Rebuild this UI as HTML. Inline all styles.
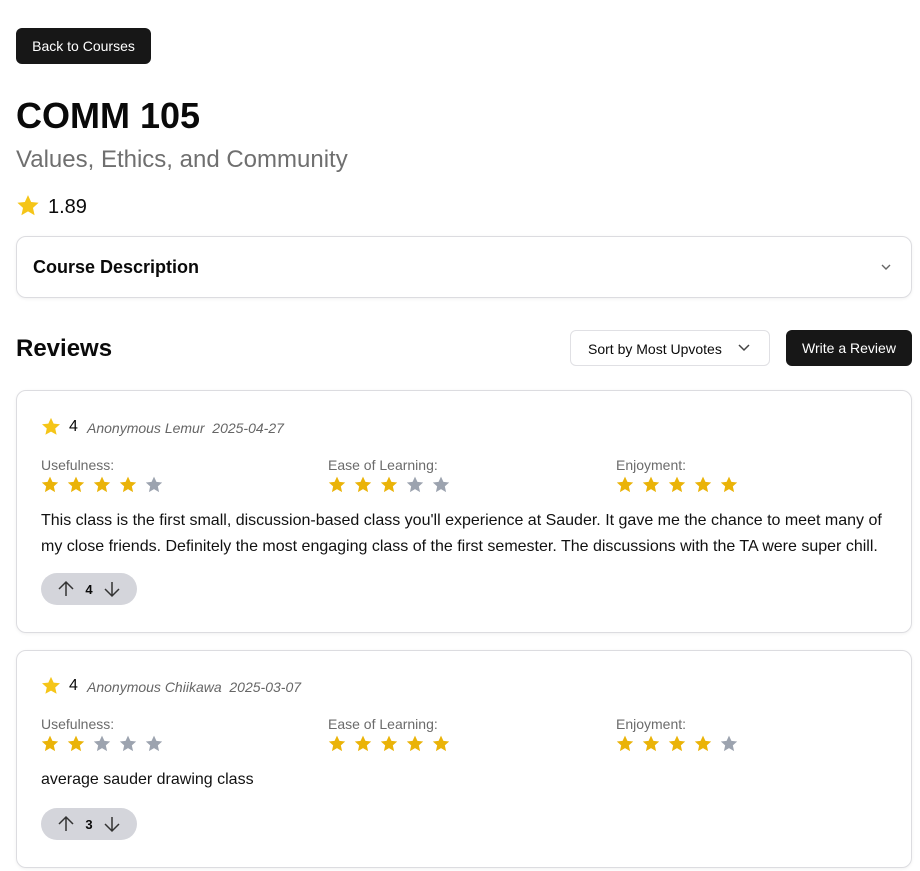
<!DOCTYPE html>
<html><head><style>
*{box-sizing:border-box;margin:0;padding:0}
body{width:920px;height:871px;background:#fff;font-family:"Liberation Sans",Arial,sans-serif;color:#0a0a0a;position:relative;overflow:hidden}
.a{position:absolute}
.btn{background:#171717;color:#fff;border-radius:6px;font-size:14px;display:flex;align-items:center;justify-content:center}
.card{border:1px solid #dcdce0;border-radius:10px;box-shadow:0 1px 3px rgba(0,0,0,.06)}
.meta{font-size:14px;color:#666;font-style:italic}
.lbl{font-size:14px;color:#6b6b6b}
.stars svg{width:20px;height:20px;margin-right:6px}
.vote{background:#d4d5db;border-radius:16px;width:96px;height:32px;display:flex;align-items:center;justify-content:center;gap:10px;font-size:13px;font-weight:bold}
.txt{font-size:16px;line-height:26px;color:#111}
</style></head><body>
<svg width="0" height="0" style="position:absolute"><defs><path id="s" d="M12 2l2.9 6.3 6.9.7-5.2 4.7 1.5 6.8L12 17l-6.1 3.5 1.5-6.8L2.2 9l6.9-.7z"/></defs></svg>

<div class="a btn" style="left:16px;top:28px;width:135px;height:36px">Back to Courses</div>
<div class="a" style="left:16px;top:95px;font-size:36px;font-weight:bold">COMM 105</div>
<div class="a" style="left:16px;top:146px;font-size:24px;color:#6f6f6f">Values, Ethics, and Community</div>
<svg class="a" style="left:15px;top:193px" width="26" height="26" viewBox="0 0 24 24"><use href="#s" fill="#f5c518"/></svg>
<div class="a" style="left:48px;top:196px;font-size:20px">1.89</div>

<div class="a card" style="left:16px;top:236px;width:896px;height:62px"></div>
<div class="a" style="left:33px;top:257px;font-size:18px;font-weight:bold">Course Description</div>
<svg class="a" style="left:880px;top:262px" width="12" height="10" viewBox="0 0 12 10"><path d="M2 3l4 4 4-4" stroke="#666" stroke-width="1.4" fill="none"/></svg>

<div class="a" style="left:16px;top:335px;font-size:24px;font-weight:bold">Reviews</div>
<div class="a" style="left:570px;top:330px;width:200px;height:36px;border:1px solid #e0e0e4;border-radius:6px;font-size:14px;padding:10px 0 0 17px">Sort by Most Upvotes</div>
<svg class="a" style="left:737px;top:342px" width="14" height="12" viewBox="0 0 14 12"><path d="M2 3l5 5 5-5" stroke="#444" stroke-width="1.5" fill="none"/></svg>
<div class="a btn" style="left:786px;top:330px;width:126px;height:36px">Write a Review</div>

<!-- card 1 -->
<div class="a card" style="left:16px;top:390px;width:896px;height:243px"></div>
<svg class="a" style="left:40px;top:416px" width="22" height="22" viewBox="0 0 24 24"><use href="#s" fill="#f5c518"/></svg>
<div class="a" style="left:69px;top:418px;font-size:16px">4</div>
<div class="a meta" style="left:87px;top:420px">Anonymous Lemur&nbsp; 2025-04-27</div>
<div class="a lbl" style="left:41px;top:457px">Usefulness:</div>
<div class="a lbl" style="left:328px;top:457px">Ease of Learning:</div>
<div class="a lbl" style="left:616px;top:457px">Enjoyment:</div>
<div class="a stars" style="left:40px;top:475px"><svg viewBox="0 0 24 24"><use href="#s" fill="#eab308"/></svg><svg viewBox="0 0 24 24"><use href="#s" fill="#eab308"/></svg><svg viewBox="0 0 24 24"><use href="#s" fill="#eab308"/></svg><svg viewBox="0 0 24 24"><use href="#s" fill="#eab308"/></svg><svg viewBox="0 0 24 24"><use href="#s" fill="#9ca3af"/></svg></div>
<div class="a stars" style="left:327px;top:475px"><svg viewBox="0 0 24 24"><use href="#s" fill="#eab308"/></svg><svg viewBox="0 0 24 24"><use href="#s" fill="#eab308"/></svg><svg viewBox="0 0 24 24"><use href="#s" fill="#eab308"/></svg><svg viewBox="0 0 24 24"><use href="#s" fill="#9ca3af"/></svg><svg viewBox="0 0 24 24"><use href="#s" fill="#9ca3af"/></svg></div>
<div class="a stars" style="left:615px;top:475px"><svg viewBox="0 0 24 24"><use href="#s" fill="#eab308"/></svg><svg viewBox="0 0 24 24"><use href="#s" fill="#eab308"/></svg><svg viewBox="0 0 24 24"><use href="#s" fill="#eab308"/></svg><svg viewBox="0 0 24 24"><use href="#s" fill="#eab308"/></svg><svg viewBox="0 0 24 24"><use href="#s" fill="#eab308"/></svg></div>
<div class="a txt" style="left:41px;top:508px;width:850px">This class is the first small, discussion-based class you'll experience at Sauder. It gave me the chance to meet many of my close friends. Definitely the most engaging class of the first semester. The discussions with the TA were super chill.</div>
<div class="a vote" style="left:41px;top:573px"><svg width="18" height="18" viewBox="0 0 18 18"><path d="M9 16V2M2 9l7-7 7 7" stroke="#333" stroke-width="1.5" fill="none"/></svg>4<svg width="18" height="18" viewBox="0 0 18 18"><path d="M9 2v14M2 9l7 7 7-7" stroke="#333" stroke-width="1.5" fill="none"/></svg></div>

<!-- card 2 -->
<div class="a card" style="left:16px;top:650px;width:896px;height:218px"></div>
<svg class="a" style="left:40px;top:675px" width="22" height="22" viewBox="0 0 24 24"><use href="#s" fill="#f5c518"/></svg>
<div class="a" style="left:69px;top:677px;font-size:16px">4</div>
<div class="a meta" style="left:87px;top:679px">Anonymous Chiikawa&nbsp; 2025-03-07</div>
<div class="a lbl" style="left:41px;top:716px">Usefulness:</div>
<div class="a lbl" style="left:328px;top:716px">Ease of Learning:</div>
<div class="a lbl" style="left:616px;top:716px">Enjoyment:</div>
<div class="a stars" style="left:40px;top:734px"><svg viewBox="0 0 24 24"><use href="#s" fill="#eab308"/></svg><svg viewBox="0 0 24 24"><use href="#s" fill="#eab308"/></svg><svg viewBox="0 0 24 24"><use href="#s" fill="#9ca3af"/></svg><svg viewBox="0 0 24 24"><use href="#s" fill="#9ca3af"/></svg><svg viewBox="0 0 24 24"><use href="#s" fill="#9ca3af"/></svg></div>
<div class="a stars" style="left:327px;top:734px"><svg viewBox="0 0 24 24"><use href="#s" fill="#eab308"/></svg><svg viewBox="0 0 24 24"><use href="#s" fill="#eab308"/></svg><svg viewBox="0 0 24 24"><use href="#s" fill="#eab308"/></svg><svg viewBox="0 0 24 24"><use href="#s" fill="#eab308"/></svg><svg viewBox="0 0 24 24"><use href="#s" fill="#eab308"/></svg></div>
<div class="a stars" style="left:615px;top:734px"><svg viewBox="0 0 24 24"><use href="#s" fill="#eab308"/></svg><svg viewBox="0 0 24 24"><use href="#s" fill="#eab308"/></svg><svg viewBox="0 0 24 24"><use href="#s" fill="#eab308"/></svg><svg viewBox="0 0 24 24"><use href="#s" fill="#eab308"/></svg><svg viewBox="0 0 24 24"><use href="#s" fill="#9ca3af"/></svg></div>
<div class="a txt" style="left:41px;top:767px">average sauder drawing class</div>
<div class="a vote" style="left:41px;top:808px"><svg width="18" height="18" viewBox="0 0 18 18"><path d="M9 16V2M2 9l7-7 7 7" stroke="#333" stroke-width="1.5" fill="none"/></svg>3<svg width="18" height="18" viewBox="0 0 18 18"><path d="M9 2v14M2 9l7 7 7-7" stroke="#333" stroke-width="1.5" fill="none"/></svg></div>
</body></html>
